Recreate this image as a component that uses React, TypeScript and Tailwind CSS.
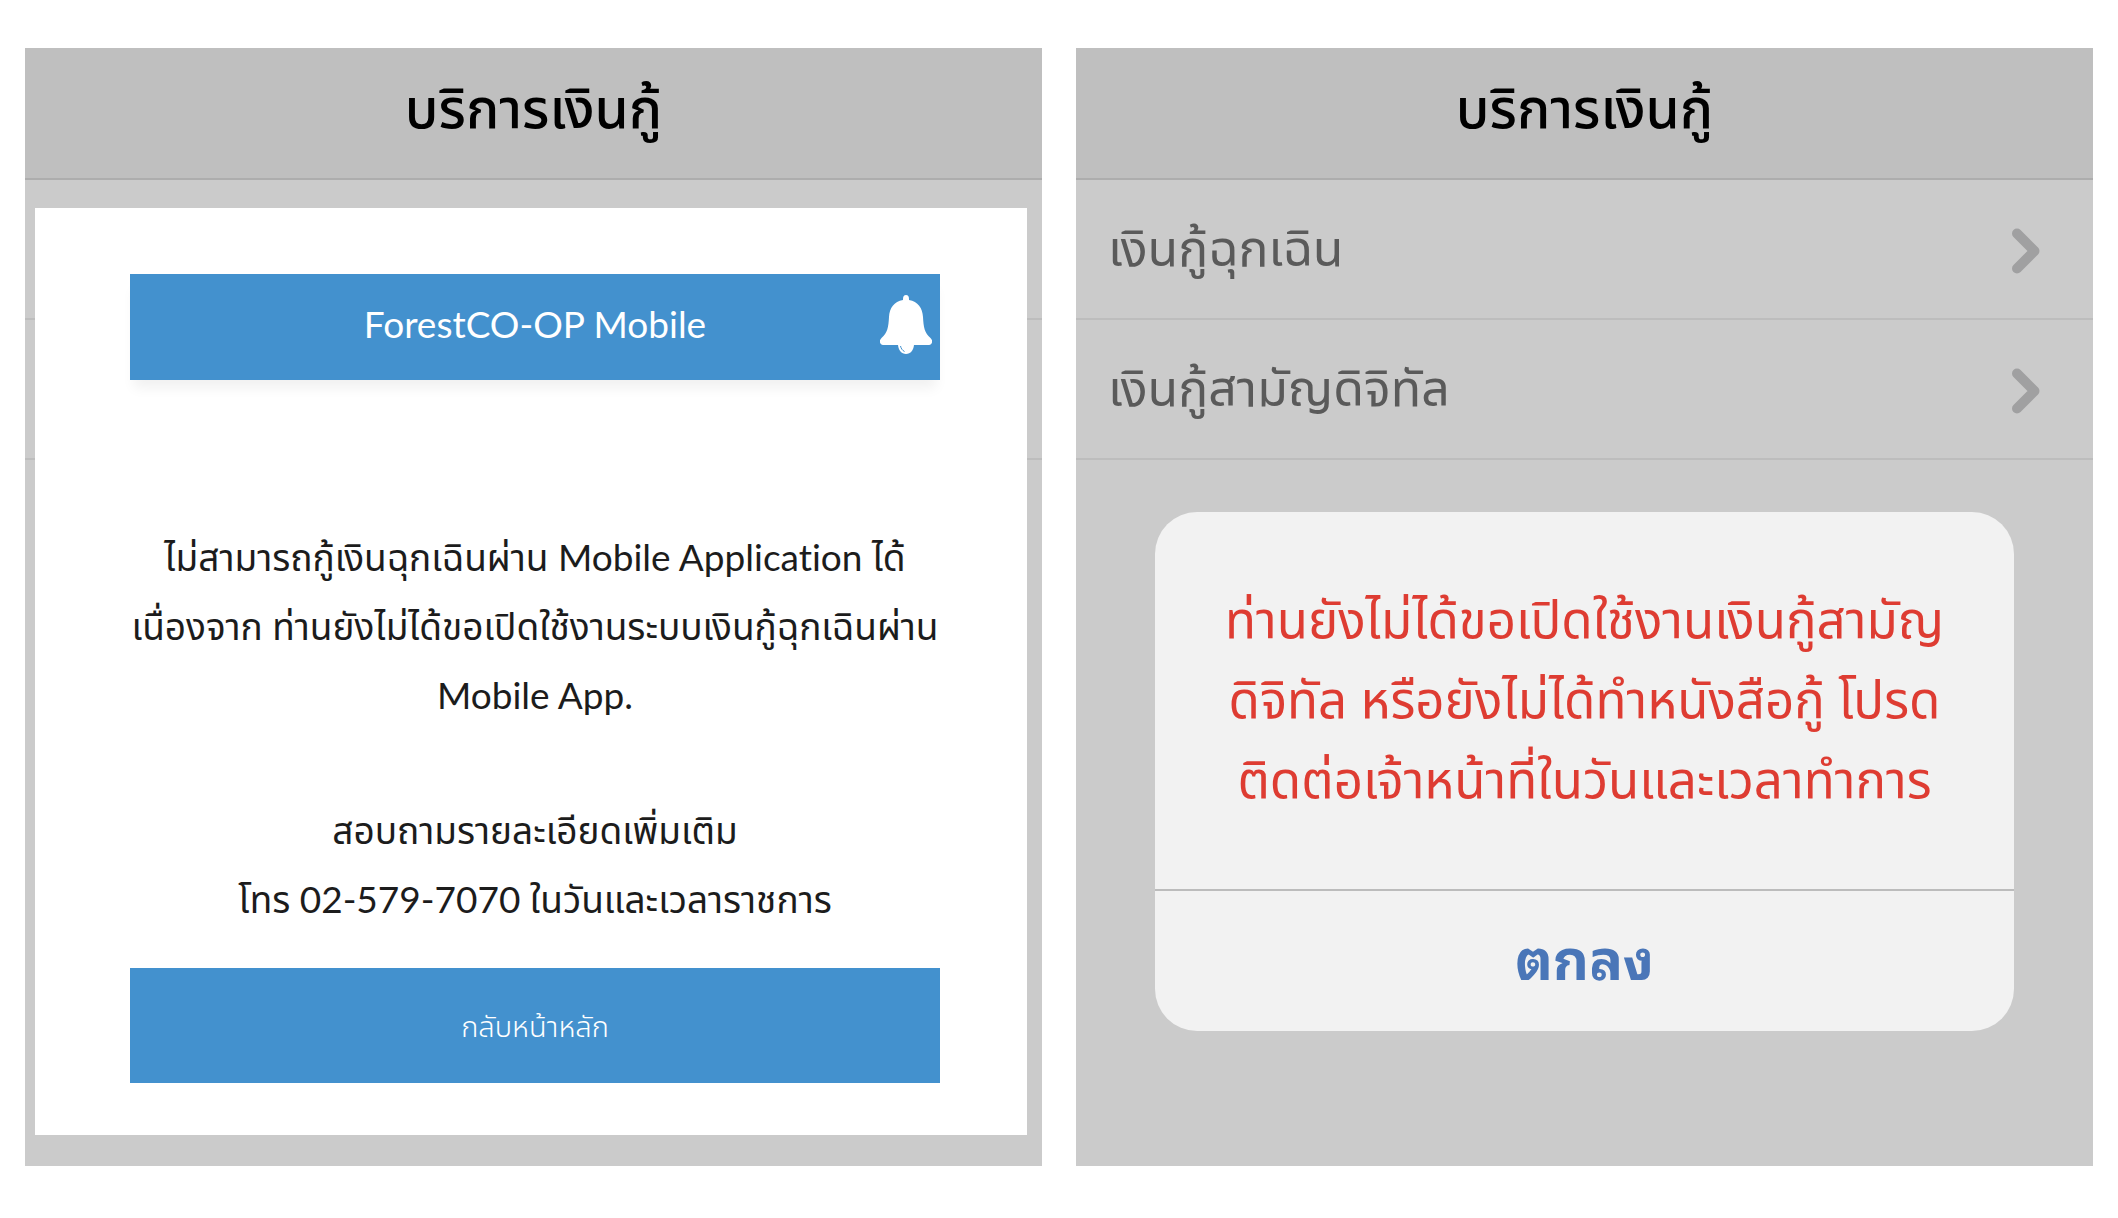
import React, { type ReactNode } from "react";

const loans = ["เงินกู้ฉุกเฉิน", "เงินกู้สามัญดิจิทัล"];

function BellIcon() {
  return (
    <svg viewBox="0 0 52 60" className="h-[60px] w-[52px]" fill="currentColor" aria-hidden="true">
      <path d="M26 0c2 0 3 1.500 3 4v1c9 1.500 13.500 8 14 17 .5 10 1.500 16 7.500 21 1.500 1.500 2 3 1.500 4.500-.5 1.500-1.500 2.500-3 2.500H3C1.500 50 .5 49 0 47.500-.5 46 0 44.500 1.500 43c6-5 7-11 7.500-21C9.500 13 14 6.500 23 5V4c0-2.500 1-4 3-4Z" />
      <path d="M18 49h16c0 6-3.500 10-8 10S18 55 18 49Z" />
      <path d="M20.500 51c.5 2.500 2 4.500 4 5.500" fill="none" stroke="#4391ce" strokeWidth="1" />
    </svg>
  );
}

function ChevronIcon() {
  return (
    <svg viewBox="0 0 28 46" className="h-[46px] w-[28px]" fill="none" stroke="#a0a0a1" strokeWidth="10" strokeLinecap="round" strokeLinejoin="round" aria-hidden="true">
      <path d="M5 5.500 22.500 23 5 40.500" />
    </svg>
  );
}

function LoanList() {
  return (
    <ul>
      {loans.map((name) => (
        <li key={name} className="border-b-2 border-[#bdbdbd]">
          <button type="button" className="flex h-[138px] w-full items-center justify-between pt-1 pr-[53px] pl-8 text-left text-[50px] leading-none text-[#5a5a5a]">
            <span className="pb-2">{name}</span>
            <ChevronIcon />
          </button>
        </li>
      ))}
    </ul>
  );
}

/* A dimmed phone screen: the loan list with a message laid over it. */
function Screen({ children }: { children: ReactNode }) {
  return (
    <section className="flex flex-col bg-[#cbcbcb]">
      <header className="flex h-[132px] items-center justify-center border-b-2 border-[#adadad] bg-[#bfbfbf] pb-3">
        <h1 className="text-[55px] leading-none font-medium text-black">บริการเงินกู้</h1>
      </header>
      <div className="grid flex-1">
        <div className="col-start-1 row-start-1">
          <LoanList />
        </div>
        <div className="z-10 col-start-1 row-start-1">{children}</div>
      </div>
    </section>
  );
}

export default function App() {
  return (
    <main className="grid min-h-screen grid-cols-2 gap-[34px] bg-white px-[25px] pt-12 pb-[53px] font-['Lato','Noto_Sans_Thai',sans-serif] [font-variant-ligatures:no-common-ligatures]">
      <Screen>
        <div className="mt-7 mr-[15px] mb-[31px] ml-2.5 bg-white pt-[66px] pr-[87px] pb-[52px] pl-[95px]">
          <div className="grid h-[106px] grid-cols-[1fr_auto_1fr] items-center bg-[#4391ce] pb-2 text-white shadow-[0_12px_12px_-4px_rgba(0,0,0,0.06)]">
            <h2 className="col-start-2 text-[37px] leading-none">ForestCO-OP Mobile</h2>
            <button type="button" aria-label="การแจ้งเตือน" className="justify-self-end pt-1 pr-2">
              <BellIcon />
            </button>
          </div>
          <div className="mt-[142px] text-center text-[37px] leading-[69px] whitespace-nowrap text-[#1c1c1c]">
            <p>
              ไม่สามารถกู้เงินฉุกเฉินผ่าน Mobile Application ได้
              <br />
              เนื่องจาก ท่านยังไม่ได้ขอเปิดใช้งานระบบเงินกู้ฉุกเฉินผ่าน
              <br />
              Mobile App.
            </p>
            <p className="mt-[66px]">
              สอบถามรายละเอียดเพิ่มเติม
              <br />
              โทร 02-579-7070 ในวันและเวลาราชการ
            </p>
          </div>
          <button type="button" className="mt-[35px] h-[115px] w-full bg-[#4391ce] text-[29px] font-light text-white">
            กลับหน้าหลัก
          </button>
        </div>
      </Screen>
      <Screen>
        <div role="alertdialog" aria-label="แจ้งเตือน" className="mx-[79px] mt-[332px] overflow-hidden rounded-[42px] bg-[#f2f2f2] font-['Noto_Sans_Thai',sans-serif]">
          <p className="px-4 pt-[71px] pb-[66px] text-center text-[51px] leading-[80px] whitespace-nowrap text-[#de3c32]">
            ท่านยังไม่ได้ขอเปิดใช้งานเงินกู้สามัญ
            <br />
            ดิจิทัล หรือยังไม่ได้ทำหนังสือกู้ โปรด
            <br />
            ติดต่อเจ้าหน้าที่ในวันและเวลาทำการ
          </p>
          <button type="button" className="h-[142px] w-full border-t-2 border-[#bcbcbc] pb-3 font-['Noto_Sans_Thai_Looped',sans-serif] text-[56px] leading-none font-bold text-[#4a76b8]">
            ตกลง
          </button>
        </div>
      </Screen>
    </main>
  );
}
